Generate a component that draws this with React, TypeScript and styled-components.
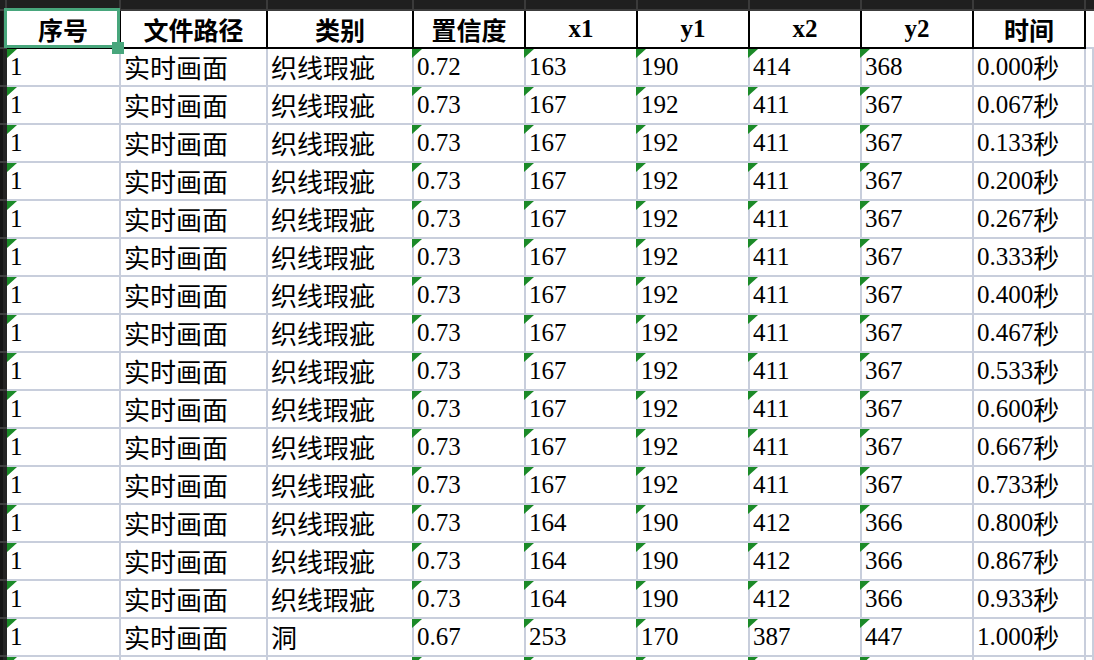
import React from "react";
import styled, { createGlobalStyle } from "styled-components";

const GlobalStyle = createGlobalStyle`
  html, body { margin: 0; padding: 0; background: #ffffff; overflow: hidden; }
  #root { width: 1094px; height: 660px; }
`;

const GRID_LINE = "#c8cedc";
const FLAG = "#1b8a28";
const SELECT = "#48a67c";

const Sheet = styled.div`
  display: grid;
  grid-template-columns: 7px 114px 147px 146px repeat(6, 112px) 1fr;
  grid-template-rows: 11px;
  grid-auto-rows: 38px;
  width: 1094px;
  height: 660px;
  overflow: hidden;
  background: #ffffff;
  font-family: "Liberation Serif", "Noto Sans CJK SC", serif;
  font-size: 25px;
  color: #000000;
`;

const BandCell = styled.div<{ $edge?: boolean }>`
  box-sizing: border-box;
  background: #1f1f1f;
  border-bottom: 2px solid #3c3c3c;
  border-right: ${(p) => (p.$edge ? "none" : "2px solid #3a3a3a")};
`;

const RowStub = styled.div`
  box-sizing: border-box;
  background: #242424;
  box-shadow: inset 3px 0 0 #151515;
  border-bottom: 2px solid #3e3e3e;
`;

const HeaderCell = styled.div<{ $plain?: boolean }>`
  position: relative;
  box-sizing: border-box;
  display: flex;
  align-items: center;
  justify-content: center;
  font-weight: 700;
  border-right: ${(p) => (p.$plain ? "none" : "2px solid #000000")};
  border-bottom: 2px solid ${(p) => (p.$plain ? GRID_LINE : "#000000")};
  padding-bottom: 1px;
`;

const Selection = styled.div`
  position: absolute;
  top: -3px;
  left: -3px;
  right: -1px;
  bottom: -1px;
  border: 3px solid ${SELECT};
  pointer-events: none;
  z-index: 2;
`;

const FillHandle = styled.div`
  position: absolute;
  right: -7px;
  bottom: -9px;
  width: 12px;
  height: 12px;
  background: ${SELECT};
  z-index: 3;
`;

const Cell = styled.div<{ $flag?: boolean; $first?: boolean }>`
  position: relative;
  box-sizing: border-box;
  display: flex;
  align-items: center;
  padding-left: 3px;
  padding-bottom: 1px;
  white-space: nowrap;
  border-right: 2px solid ${GRID_LINE};
  border-bottom: 2px solid ${GRID_LINE};

  &::before {
    content: "";
    display: ${(p) => (p.$flag ? "block" : "none")};
    position: absolute;
    top: 0;
    left: ${(p) => (p.$first ? "0" : "-2px")};
    width: 0;
    height: 0;
    border-top: 9px solid ${FLAG};
    border-right: 10px solid transparent;
  }
`;

const Han = styled.span`
  font-family: "Noto Sans CJK SC", sans-serif;
  font-size: 26px;
`;

const headers = ["序号", "文件路径", "类别", "置信度", "x1", "y1", "x2", "y2", "时间"];

type Row = string[];

const times = [
  "0.000", "0.067", "0.133", "0.200", "0.267", "0.333", "0.400", "0.467",
  "0.533", "0.600", "0.667", "0.733", "0.800", "0.867", "0.933", "1.000",
];

const rows: Row[] = times.map((t, i) => {
  if (i === 0) return ["1", "实时画面", "织线瑕疵", "0.72", "163", "190", "414", "368", t];
  if (i < 12) return ["1", "实时画面", "织线瑕疵", "0.73", "167", "192", "411", "367", t];
  if (i < 15) return ["1", "实时画面", "织线瑕疵", "0.73", "164", "190", "412", "366", t];
  return ["1", "实时画面", "洞", "0.67", "253", "170", "387", "447", t];
});
// partially visible next row: only its cell markers show in the reference
rows.push(["", "", "", "", "", "", "", "", ""]);

const flagged = [true, false, false, true, true, true, true, true, false];

function renderValue(v: string, ci: number) {
  if (v === "") return null;
  if (ci === 1 || ci === 2) return <Han>{v}</Han>;
  if (ci === 8)
    return (
      <>
        {v}
        <Han>秒</Han>
      </>
    );
  return v;
}

export default function App() {
  return (
    <>
      <GlobalStyle />
      <Sheet>
        <BandCell />
        {headers.map((h) => (
          <BandCell key={"band-" + h} />
        ))}
        <BandCell $edge />

        <RowStub />
        {headers.map((h, i) => (
          <HeaderCell key={h}>
            {h}
            {i === 0 && (
              <Selection>
                <FillHandle />
              </Selection>
            )}
          </HeaderCell>
        ))}
        <HeaderCell $plain />

        {rows.map((r, ri) => (
          <React.Fragment key={ri}>
            <RowStub />
            {r.map((v, ci) => (
              <Cell key={ci} $flag={flagged[ci]} $first={ci === 0}>
                {renderValue(v, ci)}
              </Cell>
            ))}
            <Cell />
          </React.Fragment>
        ))}
      </Sheet>
    </>
  );
}
